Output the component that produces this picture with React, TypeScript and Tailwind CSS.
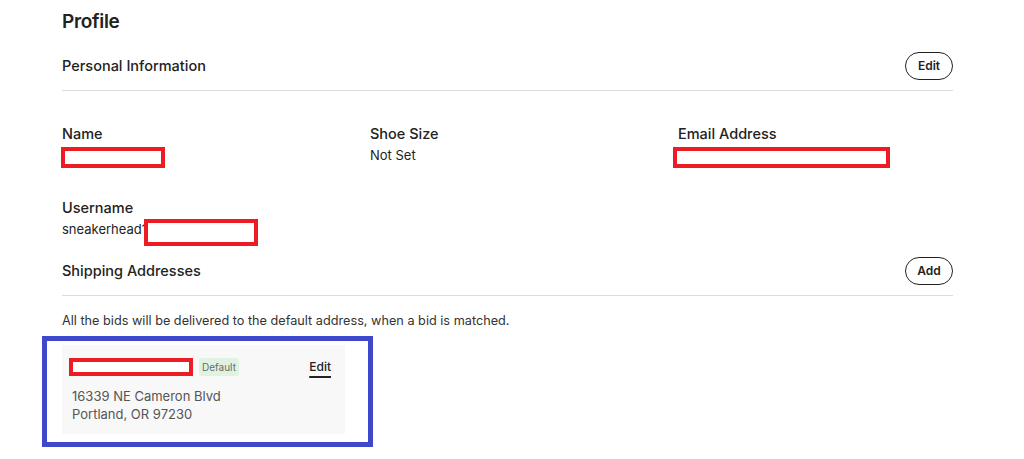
const FONT = { fontFamily: 'Inter, "Noto Sans", sans-serif' };

function Redact({ className }: { className: string }) {
  return <span className={`inline-block border-[4px] border-[#ed1c24] bg-white ${className}`} />;
}

function PillButton({ label }: { label: string }) {
  return (
    <button className="h-[28px] w-[48px] rounded-full border border-[#222] text-[12px] font-semibold text-[#222] bg-white">
      {label}
    </button>
  );
}

function SectionHeader({ title, action }: { title: string; action: string }) {
  return (
    <div className="flex items-center justify-between border-b border-[#dcdcdc] pb-[10px]">
      <h2 className="text-[14.5px] font-medium text-[#222] leading-[20px]">{title}</h2>
      <PillButton label={action} />
    </div>
  );
}

function Field({ label, children }: { label: string; children: React.ReactNode }) {
  return (
    <div className="flex flex-col">
      <span className="text-[14.5px] font-medium text-[#222] leading-[20px]">{label}</span>
      <div className="h-[24px] flex items-center text-[13px] text-[#222]">{children}</div>
    </div>
  );
}

export default function App() {
  return (
    <div className="w-[1024px] h-[459px] bg-white overflow-hidden" style={FONT}>
      <div className="ml-[62px] w-[891px] pt-[10px]">
        <h1 className="text-[19px] font-semibold leading-[24px] tracking-[-0.3px] text-[#222]">Profile</h1>

        {/* Personal information */}
        <div className="mt-[18px]">
          <SectionHeader title="Personal Information" action="Edit" />
        </div>

        <div className="mt-[33px] grid grid-cols-[308px_308px_1fr] gap-y-[30px]">
          <Field label="Name">
            <Redact className="w-[104px] h-[21px] -ml-[1px] mt-[2px]" />
          </Field>
          <Field label="Shoe Size">Not Set</Field>
          <Field label="Email Address">
            <Redact className="w-[217px] h-[21px] -ml-[5px] mt-[3px]" />
          </Field>
          <Field label="Username">
            <span className="flex items-center">
              sneakerhead1
              <Redact className="w-[114px] h-[27px] -ml-[3px] mt-[4px]" />
            </span>
          </Field>
        </div>

        {/* Shipping addresses */}
        <div className="mt-[15px]">
          <SectionHeader title="Shipping Addresses" action="Add" />
        </div>

        <p className="mt-[16px] text-[12.7px] leading-[18px] text-[#333]">
          All the bids will be delivered to the default address, when a bid is matched.
        </p>

        <div className="relative mt-[15px] w-[283px]">
          <div className="bg-[#f8f8f8] h-[89px] pl-[10px] pr-[14px] pt-[13px]">
            <div className="flex items-center">
              <Redact className="w-[124px] h-[18px] -ml-[3px]" />
              <span className="ml-[6px] h-[18px] px-[3px] rounded-[3px] bg-[#e0f3e3] text-[10px] leading-[18px] text-[#6b6b6b]">
                Default
              </span>
              <span className="ml-auto text-[12px] font-medium text-[#222] underline decoration-2 underline-offset-[5px] leading-[18px]">
                Edit
              </span>
            </div>
            <div className="mt-[11px] text-[13px] leading-[18px] text-[#555]">
              <div>16339 NE Cameron Blvd</div>
              <div>Portland, OR 97230</div>
            </div>
          </div>
          {/* annotation frame */}
          <div className="absolute -left-[20px] -top-[9px] w-[331px] h-[111px] border-[5px] border-[#3f48cc] pointer-events-none" />
        </div>
      </div>
    </div>
  );
}
